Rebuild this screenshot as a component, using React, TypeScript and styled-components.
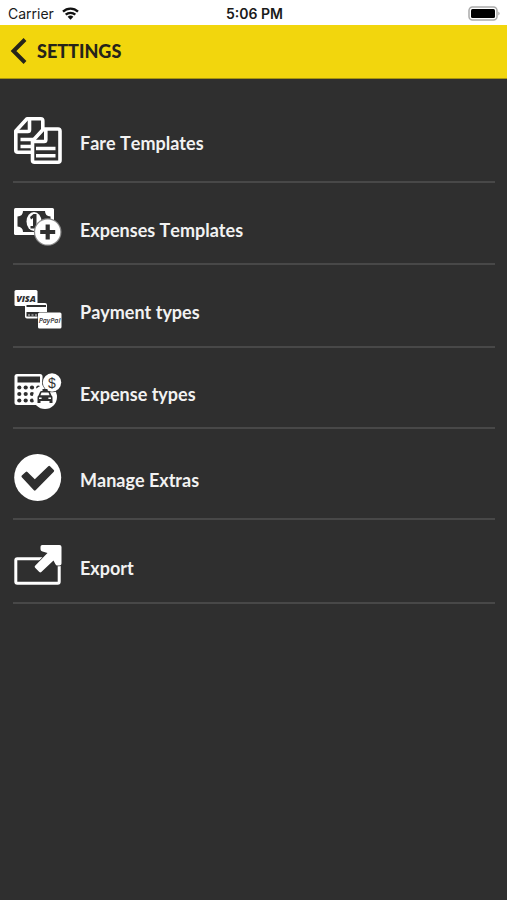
import React from 'react';
import styled, { createGlobalStyle } from 'styled-components';

const GlobalStyle = createGlobalStyle`
  *, *::before, *::after { box-sizing: border-box; }
  body { margin: 0; background: #2f2f2f; }
`;

const Screen = styled.div`
  min-height: 100vh;
  background: #2f2f2f;
  color: #f2f2f2;
  font-family: Lato, sans-serif;
`;

const StatusBar = styled.div`
  display: grid;
  grid-template-columns: 1fr auto 1fr;
  align-items: center;
  height: 25px;
  padding: 2px 6px 0 8px;
  background: #ffffff;
  color: #1a1a1a;
  font: 14px/20px Inter, sans-serif;
`;

const Carrier = styled.div`
  display: flex;
  align-items: center;
  gap: 8px;
`;

const Clock = styled.time`
  font-weight: 600;
`;

const Battery = styled.svg`
  justify-self: end;
`;

const Header = styled.header`
  display: flex;
  align-items: center;
  gap: 10px;
  height: 54px;
  padding: 0 10px 2px;
  background: #f2d60d;
  border-bottom: 1px solid #a8960f;
  color: #26241a;
`;

const BackButton = styled.button`
  display: flex;
  padding: 0;
  border: 0;
  background: none;
  color: inherit;
  cursor: pointer;
`;

const Title = styled.h1`
  margin: 0;
  font-size: 18px;
  line-height: 24px;
  font-weight: 900;
  font-kerning: none;
`;

const Menu = styled.ul`
  margin: 0;
  padding: 13px 12px 0 13px;
  list-style: none;
`;

const MenuItem = styled.li`
  border-bottom: 2px solid #484848;
`;

const MenuButton = styled.button`
  display: flex;
  align-items: center;
  gap: 18px;
  width: 100%;
  padding: 25px 0 17px 1px;
  border: 0;
  background: none;
  color: inherit;
  font: 700 18px/24px Lato, sans-serif;
  font-kerning: none;
  text-align: left;
  cursor: pointer;
`;

const Icon = styled.svg`
  display: block;
  flex: none;
`;

const Label = styled.span`
  padding-top: 5px;
`;

const DARK = '#2f2f2f';

const FareIcon = () => (
  <Icon width="48" height="47" viewBox="0 0 48 47" fill={DARK} stroke="#fff" strokeWidth="3.6" strokeLinejoin="round" aria-hidden="true">
    <path d="M13 1.800H26.800q2 0 2 2V35.200H3.800q-2 0-2-2V14Z" />
    <path d="M15.500 2.500v10.300q0 1.700-1.700 1.700H3" fill="none" />
    <path d="M6.500 22.500h13M6.500 29.500h13" />
    <path d="M29.500 12H44q2 0 2 2v29.200q0 2-2 2H20.500q-2 0-2-2V24Z" />
    <path d="M31.800 12.500v10.300q0 1.700-1.700 1.700H19.500" fill="none" />
    <path d="M22 31.500h19.500M22 38.800h19.500" />
  </Icon>
);

const MoneyIcon = () => (
  <Icon width="48" height="38" viewBox="0 0 48 38" aria-hidden="true">
    <rect width="40" height="27" x="0" y="0" rx="1.500" fill="#fff" />
    <path d="M9 3h22q0 5 5.500 5.500v10q-5.500.500-5.500 5.500H9q0-5-5.500-5.500V8.500Q9 8 9 3Z" fill={DARK} />
    <ellipse cx="20" cy="13.500" rx="7.500" ry="9.500" fill="#fff" />
    <path d="M16 9 19.500 6h3v12h2v2.500h-8V18h2.500V10l-2 1.500Z" fill={DARK} />
    <circle cx="33.700" cy="24" r="13.800" fill="#8a8a8a" />
    <circle cx="33.700" cy="24" r="12.600" fill="#fff" />
    <path d="M33.700 16.500v15M26.200 24h15" stroke={DARK} strokeWidth="4.200" />
  </Icon>
);

const CardsIcon = () => (
  <Icon width="48" height="39" viewBox="0 0 48 39" aria-hidden="true">
    <rect x="0.500" y="0" width="23" height="16" rx="1.500" fill="#fff" />
    <rect x="11" y="13" width="22" height="15.500" rx="2" fill="#fff" />
    <path d="M12.500 16h19.500" stroke={DARK} strokeWidth="2" />
    <path d="M12.500 22h19v4.500h-19Z" fill={DARK} />
    <path d="M14 25h2M17.500 25h2M21 25h2" stroke="#ddd" />
    <rect x="23.500" y="22" width="24" height="17" fill={DARK} />
    <rect x="24" y="22.500" width="23.500" height="16" rx="1.500" fill="#fff" />
    <text x="12" y="11.500" textAnchor="middle" fontFamily="Open Sans, sans-serif" fontSize="9" fontWeight="800" fontStyle="italic" fill={DARK}>VISA</text>
    <text x="35.500" y="33" textAnchor="middle" fontFamily="Open Sans, sans-serif" fontSize="7" fontWeight="600" fontStyle="italic" fill={DARK}>PayPal</text>
  </Icon>
);

const CalculatorIcon = () => (
  <Icon width="48" height="37" viewBox="0 0 48 37" aria-hidden="true">
    <rect x="0.500" y="1" width="28" height="31" rx="2.500" fill="#fff" />
    <path d="M3.500 3.500h22.500v6H3.500Z" fill={DARK} />
    {[14.5, 21, 27.5].map((y) =>
      [5.3, 11.7, 18, 24.3].map((x) => <circle key={`${x}-${y}`} cx={x} cy={y} r="2.100" fill={DARK} />),
    )}
    <circle cx="31" cy="24" r="12" fill="#fff" />
    <circle cx="38" cy="9.500" r="9.800" fill={DARK} />
    <circle cx="38" cy="9.500" r="9.200" fill="#fff" />
    <text x="38" y="14.500" textAnchor="middle" fontFamily="Liberation Sans, sans-serif" fontSize="14" fontWeight="400" fill="#333">$</text>
    <path d="M28.500 16h5v2h-5ZM27.500 18h7q1 0 1.500 1l1.500 3.500q1 .700 1 2V30h-3v-2h-9v2h-3v-5.500q0-1.300 1-2L26 19q.500-1 1.500-1Z" fill={DARK} />
    <path d="m27.500 19.500-1 2.800h9l-1-2.800Z" fill="#fff" />
    <path d="M25 25.200h2.600M34.400 25.200H37" stroke="#fff" strokeWidth="1.500" />
  </Icon>
);

const CheckIcon = () => (
  <Icon width="48" height="47" viewBox="0 0 48 47" aria-hidden="true">
    <circle cx="23.700" cy="23.500" r="23.500" fill="#fff" />
    <path d="M7.800 23.200q-.800-.800 0-1.600l3.900-3.700q.900-.800 1.700 0l7.400 7.400L34.300 12.200q.900-.800 1.700 0l3.800 3.800q.800.800 0 1.700L21.600 36.300q-.800.800-1.700 0Z" fill={DARK} />
  </Icon>
);

const ExportIcon = () => (
  <Icon width="48" height="40" viewBox="0 0 48 40" aria-hidden="true">
    <rect x="1.800" y="13.800" width="43.400" height="24.500" rx="1.500" fill="none" stroke="#fff" strokeWidth="3" />
    <path d="M28.200 0H45.500q2 0 2 2v16.500q0 2-2 2h-2q-1.500 0-2.200-1.500L39.500 15.500 27.300 27q-1 .900-2 0l-4.200-4.200q-1-1 0-2L33.500 8 28.500 6.500q-2-.500-2-2.300V1.700Q26.500 0 28.200 0Z" fill="#fff" stroke={DARK} strokeWidth="1.500" paintOrder="stroke" />
  </Icon>
);

const items = [
  { label: 'Fare Templates', Glyph: FareIcon },
  { label: 'Expenses Templates', Glyph: MoneyIcon },
  { label: 'Payment types', Glyph: CardsIcon },
  { label: 'Expense types', Glyph: CalculatorIcon },
  { label: 'Manage Extras', Glyph: CheckIcon },
  { label: 'Export', Glyph: ExportIcon },
];

export default function App() {
  return (
    <Screen>
      <GlobalStyle />
      <StatusBar>
        <Carrier>
          <span>Carrier</span>
          <svg width="17" height="13" viewBox="0 0 17 13" fill="none" stroke="#111" strokeWidth="2.300" aria-hidden="true">
            <path d="M1 4.700a10.800 10.800 0 0 1 15 0M3.700 7.700a7 7 0 0 1 9.600 0" />
            <path d="M8.500 12.700 5.600 9.800a4.200 4.200 0 0 1 5.800 0Z" fill="#111" stroke="none" />
          </svg>
        </Carrier>
        <Clock>5:06 PM</Clock>
        <Battery width="33" height="15" viewBox="0 0 33 15" aria-hidden="true">
          <rect x="1" y="1" width="28" height="13" rx="3.500" fill="#fff" stroke="#aaa" strokeWidth="1.500" />
          <rect x="3" y="3" width="24" height="9" rx="1.500" fill="#000" />
          <path d="M30.500 5.500q2 2 0 4Z" fill="#888" />
        </Battery>
      </StatusBar>
      <Header>
        <BackButton aria-label="Back">
          <svg width="17" height="26" viewBox="0 0 17 26" fill="none" stroke="currentColor" strokeWidth="4" aria-hidden="true">
            <path d="M15 1.500 3.500 13 15 24.500" />
          </svg>
        </BackButton>
        <Title>SETTINGS</Title>
      </Header>
      <main>
        <Menu>
          {items.map(({ label, Glyph }) => (
            <MenuItem key={label}>
              <MenuButton>
                <Glyph />
                <Label>{label}</Label>
              </MenuButton>
            </MenuItem>
          ))}
        </Menu>
      </main>
    </Screen>
  );
}
